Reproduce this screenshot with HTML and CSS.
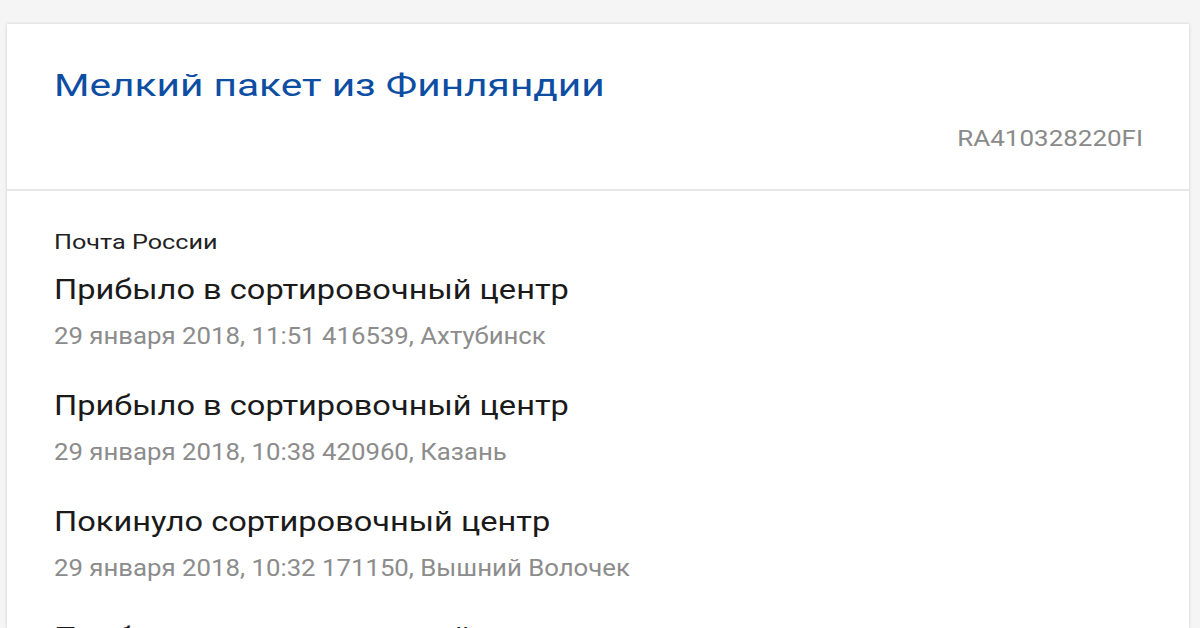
FILE: index.html
```html
<!DOCTYPE html>
<html lang="ru">
<head>
<meta charset="utf-8">
<link rel="stylesheet" href="styles.css">
</head>
<body>
<div class="card">
  <div class="card-header">
    <h1 class="title">Мелкий пакет из Финляндии</h1>
    <div class="track">RA410328220FI</div>
  </div>
  <div class="card-body">
    <div class="carrier">Почта России</div>
    <div class="event">
      <div class="event-title">Прибыло в сортировочный центр</div>
      <div class="event-meta">29 января 2018, 11:51 416539, Ахтубинск</div>
    </div>
    <div class="event">
      <div class="event-title">Прибыло в сортировочный центр</div>
      <div class="event-meta">29 января 2018, 10:38 420960, Казань</div>
    </div>
    <div class="event">
      <div class="event-title">Покинуло сортировочный центр</div>
      <div class="event-meta">29 января 2018, 10:32 171150, Вышний Волочек</div>
    </div>
    <div class="event">
      <div class="event-title">Прибыло в сортировочный центр</div>
    </div>
  </div>
</div>
</body>
</html>
```
FILE: styles.css
```css
html, body {
  margin: 0;
  padding: 0;
  background: #f5f5f5;
  height: 628px;
  overflow: hidden;
  font-family: Roboto, "Noto Sans", sans-serif;
}
.card {
  margin: 24px 11px 0 7px;
  height: 604px;
  overflow: hidden;
  background: #fff;
  box-shadow: 0 0 3px rgba(0,0,0,0.18);
}
.card-header {
  box-sizing: border-box;
  height: 167px;
  padding: 45px 46px 0 47px;
  border-bottom: 2px solid #e6e6e6;
}
.title {
  margin: 0;
  font-weight: 400;
  font-size: 32px;
  line-height: 1;
  color: #0d4ea3;
  transform: scaleX(1.27);
  transform-origin: left center;
}
.track {
  margin-top: 27px;
  text-align: right;
  font-size: 22px;
  line-height: 1;
  color: #8a8a8a;
  transform: scaleX(1.18);
  transform-origin: right center;
}
.card-body {
  padding: 41px 47px 0;
}
.carrier {
  font-size: 21px;
  line-height: 1;
  color: #222;
  margin-bottom: 23px;
  transform: scaleX(1.2);
  transform-origin: left center;
}
.event {
  margin-bottom: 44px;
}
.event-title {
  font-size: 28px;
  line-height: 1;
  color: #1a1a1a;
  transform: scaleX(1.163);
  transform-origin: left center;
}
.event-meta {
  margin-top: 21px;
  font-size: 23px;
  line-height: 1;
  color: #8c8c8c;
  transform: scaleX(1.12);
  transform-origin: left center;
}
```
